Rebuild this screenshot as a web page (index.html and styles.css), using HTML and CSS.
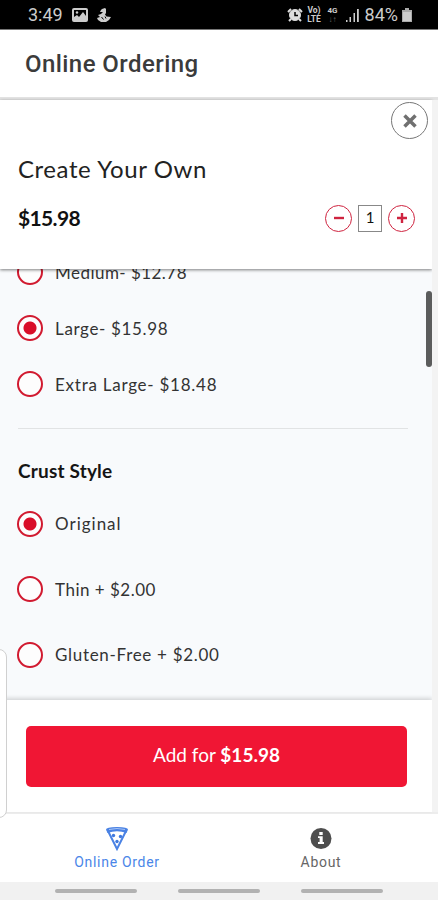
FILE: index.html
```html
<!DOCTYPE html>
<html lang="en">
<head>
<meta charset="utf-8">
<meta name="viewport" content="width=device-width">
<title>Online Ordering</title>
<link rel="stylesheet" href="styles.css">
</head>
<body>
<div class="phone">
  <div class="status">
    <span class="clock">3:49</span>
    <svg class="s-photo" width="16" height="14" viewBox="0 0 16 14"><rect x="1" y="1" width="14" height="12" rx="1" fill="none" stroke="#ccc" stroke-width="2"/><path d="M2 12V9l3-2 2 2 4-5 3 4v4z" fill="#ccc"/><circle cx="5" cy="4.500" r="1.200" fill="#ccc"/></svg>
    <svg class="s-app" width="14" height="14" viewBox="0 0 14 14"><path d="M5 1l3-1 1 1v4L8 6.500l1.500 2L14 9l-2 3-3 2H4l-3-2-1-2 3-1-2-2 3-1 2-2H3l1-2z" fill="#ccc"/><path d="M4.500 9l2 2.500M8 8.500l1 2" stroke="#000"/></svg>
    <div class="status-right">
      <svg width="16" height="14" viewBox="0 0 16 14" fill="none" stroke="#ddd"><circle cx="8" cy="7" r="5.500" fill="#ddd"/><path d="M1 4l3-3M15 4l-3-3M4 11l-2 2M12 11l2 2" stroke-width="2"/><path d="M8 4v3.500h3" stroke="#000" stroke-width="1.500"/></svg>
      <span class="tiny volte"><span>Vo)</span><span>LTE</span></span>
      <span class="tiny net"><span>4G</span><i>↓↑</i></span>
      <svg class="bars" width="13" height="14" viewBox="0 0 13 14" fill="#ccc"><path d="M0 12h1.500v2H0zM3.500 9H5v5H3.500zM7.500 5H9v9H7.500zM11 1h1.800v13H11z"/></svg>
      <span class="pct">84%</span>
      <svg class="batt" width="10" height="14" viewBox="0 0 10 14"><path d="M3 0h4v2h3v12H0V2h3z" fill="#aaa"/><path d="M1 4h8v9H1z" fill="#ccc"/></svg>
    </div>
  </div>
  <header class="appbar"><h1>Online Ordering</h1></header>

  <main class="sheet">
    <section class="product">
      <button class="close" aria-label="Close"><svg width="16" height="16" viewBox="0 0 16 16"><path d="M2.500 2.500l11 11M13.500 2.500l-11 11" stroke="#707070" stroke-width="3.500"/></svg></button>
      <h2>Create Your Own</h2>
      <div class="price-row">
        <strong>$15.98</strong>
        <div class="stepper">
          <button class="round" aria-label="Less"><svg width="12" height="12"><path d="M1 6h10" stroke="#cf2440" stroke-width="2.400"/></svg></button>
          <span class="qty">1</span>
          <button class="round" aria-label="More"><svg width="12" height="12"><path d="M1 6h10M6 1v10" stroke="#cf2440" stroke-width="2.400"/></svg></button>
        </div>
      </div>
    </section>

    <section class="options">
      <div class="sizes">
        <div class="option"><span class="radio"></span><span class="w-medium">Medium- $12.78</span></div>
        <div class="option"><span class="radio on"></span><span class="w-large">Large- $15.98</span></div>
        <div class="option"><span class="radio"></span><span class="w-xl">Extra Large- $18.48</span></div>
      </div>
      <h3>Crust Style</h3>
      <div class="crusts">
        <div class="option"><span class="radio on"></span><span class="w-original">Original</span></div>
        <div class="option"><span class="radio"></span><span class="w-thin">Thin + $2.00</span></div>
        <div class="option"><span class="radio"></span><span class="w-gf">Gluten-Free + $2.00</span></div>
      </div>
      <div class="scroll"></div>
    </section>

    <section class="cta"><button class="add"><span>Add for <b>$15.98</b></span></button></section>
    <div class="gutter"></div>
  </main>

  <nav class="tabs">
    <div class="tab active">
      <svg width="24" height="25" viewBox="0 0 24 25"><path d="M2.500 4L12 23 21.500 4" fill="none" stroke="#4a82e4" stroke-width="2"/><path d="M1 3.500Q1 1 12 1t11 2.500L21.500 7Q12 3.500 2.500 7z" fill="#4a82e4"/><path d="M4 3.500q8-2 16 0" fill="none" stroke="#a9c5f6"/><g fill="#3f79df"><circle cx="8.500" cy="9.500" r="1.700"/><circle cx="15.500" cy="10.500" r="1.700"/><circle cx="12" cy="15.500" r="1.700"/></g></svg>
      <span>Online Order</span>
    </div>
    <div class="tab about">
      <svg width="22" height="25" viewBox="0 0 22 25"><circle cx="11" cy="12.500" r="10.500" fill="#4e4e4e"/><path d="M9.300 6h3.400v3H9.300zM8 10.200h4.700V16H14v2H8v-2h1.600v-4H8z" fill="#fff"/></svg>
      <span>About</span>
    </div>
  </nav>
  <div class="sysnav"><i></i><i></i><i></i></div>
  <div class="edge"></div>
</div>
</body>
</html>
```
FILE: styles.css
```css
* { box-sizing: border-box; }
body { margin: 0; background: #fff; }
h1, h2, h3 { margin: 0; }
button { padding: 0; font: inherit; background: #fff; display: flex; align-items: center; justify-content: center; }
.phone { position: relative; width: 438px; height: 900px; overflow: hidden; display: flex; flex-direction: column; font-family: Lato, "Liberation Sans", sans-serif; color: #333; }
svg { flex: none; }
span { white-space: nowrap; }

.status { height: 30px; flex: none; background: #000; border-bottom: 1px solid #777; display: flex; align-items: center; padding: 1px 26px 0 28px; color: #ccc; font: 18px/20px Roboto, sans-serif; }
.s-photo { margin-left: 9px; }
.s-app { margin-left: 9px; }
.status-right { margin-left: auto; display: flex; align-items: center; }
.tiny { display: flex; flex-direction: column; font-size: 8px; line-height: 9px; font-weight: 700; text-align: center; }
.tiny i { font-style: normal; color: #666; }
.volte { margin-left: 4px; width: 15px; font-size: 8.5px; }
.net { margin-left: 6px; }
.bars { margin-left: 8px; }
.pct { margin-left: 6px; }
.batt { margin-left: 4px; }

.appbar { height: 70px; flex: none; border-bottom: 3px solid #e3e3e3; padding: 0 25px; display: flex; align-items: center; }
h1 { font: 500 24px/28px Roboto, sans-serif; letter-spacing: .43px; color: #3b3b3b; }

.sheet { position: relative; height: 714px; flex: none; display: flex; flex-direction: column; padding-right: 6px; border-bottom: 2px solid #ededed; }
.product { position: relative; z-index: 2; height: 169px; flex: none; background: #fff; padding: 2px 4px 0 18px; box-shadow: 0 1px 3px rgba(0,0,0,.5); display: flex; flex-direction: column; }
.close { width: 37px; height: 37px; border: 1.5px solid #777; border-radius: 50%; align-self: flex-end; }
h2 { margin-top: 14px; font-weight: 400; font-size: 24px; line-height: 32px; letter-spacing: .58px; color: #222; }
.price-row { display: flex; align-items: center; justify-content: space-between; margin-top: 19px; padding-right: 13px; }
.price-row strong { font-size: 21px; line-height: 28px; letter-spacing: -.65px; color: #111; }
.stepper { display: flex; align-items: center; gap: 6px; }
.round { width: 27px; height: 27px; border-radius: 50%; border: 1.5px solid #cf2440; }
.qty { width: 24px; height: 27px; border: 1px solid #888; font-size: 15px; line-height: 23px; text-align: center; color: #111; }

.options { position: relative; height: 431px; flex: none; overflow: hidden; background: #f8fafc; padding: 0 24px 0 17px; margin-right: -6px; }
.option { display: flex; align-items: center; gap: 12px; font-size: 17px; color: #333; }
.radio { width: 26px; height: 26px; flex: none; border: 2.5px solid #d11a30; border-radius: 50%; background: #fdfdfd; }
.radio.on { background: radial-gradient(circle, #d90e29 0 6px, #fdfdfd 7px); }
.w-medium { letter-spacing: .46px; }
.w-large { letter-spacing: .65px; }
.w-xl { letter-spacing: .75px; }
.w-original { letter-spacing: 1px; }
.w-thin { letter-spacing: .5px; }
.w-gf { letter-spacing: .7px; }
.sizes { margin: -25px 6px 0 1px; border-bottom: 1px solid #e1e3e4; padding-bottom: 16px; }
.sizes .option { height: 56px; margin-left: -1px; }
h3 { margin: 28px 0 0 1px; font-size: 19px; line-height: 28px; letter-spacing: .18px; color: #151515; }
.crusts { margin-top: 6px; }
.crusts .option { height: 65.5px; }
.scroll { position: absolute; right: 6px; top: 22px; width: 6px; height: 76px; border-radius: 3px; background: #5b5c5c; }

.cta { position: relative; z-index: 2; height: 112px; flex: none; background: #fff; box-shadow: 0 -2px 4px rgba(0,0,0,.15); padding: 26px 25px 0 26px; }
.add { width: 100%; height: 61px; border: 0; border-radius: 5px; background: #f01634; color: #fff; font-size: 19px; padding-bottom: 4px; }
.gutter { position: absolute; right: 0; top: 0; bottom: 0; width: 6px; background: #f3f3f3; z-index: 3; }

.tabs { height: 68px; flex: none; display: flex; padding: 12px 15px 0; font: 14px/17px Roboto, sans-serif; letter-spacing: .7px; }
.tab { flex: 1; display: flex; flex-direction: column; align-items: center; gap: 3px; color: #666; }
.active { color: #4a86e8; }
.sysnav { height: 18px; flex: none; background: #f1f1f1; display: flex; justify-content: center; gap: 41px; padding-top: 7px; }
.sysnav i { width: 82px; height: 4px; border-radius: 2px; background: #b2b2b2; }
.edge { position: absolute; z-index: 5; left: -12px; top: 649px; width: 19px; height: 169px; border: 1px solid #d0d0d0; border-radius: 8px; background: #fff; }
```
